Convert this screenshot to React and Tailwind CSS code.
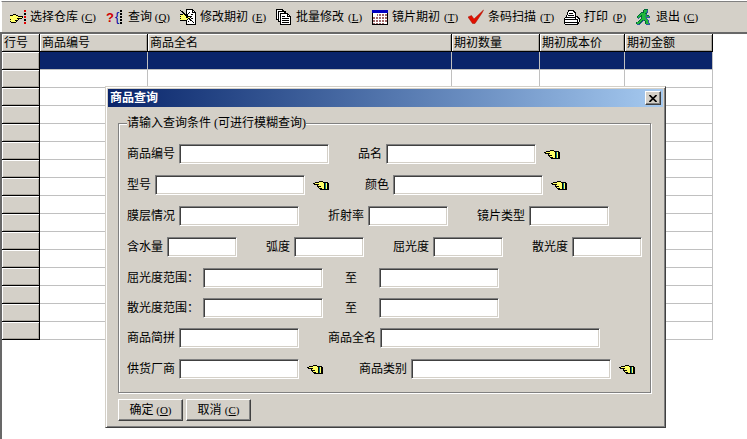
import React from 'react';

const COLORS = {
  k: '#000000',
  y: '#ffff66',
  w: '#ffffff',
  n: '#0000c0',
  r: '#e00000',
  m: '#a06868',
  g: '#22b83c',
  d: '#006838',
  b: '#3058a0',
  t: '#008080',
};

const HAND = [
  '......kkkk......',
  '..kkkkyyyykkkkk.',
  'kkyyyyyyyyyktykk',
  '.kkkkkyyyyyktykk',
  '....kyyyyyyktykk',
  '....kkkkyyyktykk',
  '.....kyyyyyktykk',
  '......kkkyyktykk',
  '.......kkkkkkkkk',
];

const PICK = [
  '..............rr',
  '..............rr',
  '................',
  '..............kk',
  '...kkk........kk',
  'kkkyyykk........',
  'yyyyyyyykkkkk.rr',
  'yyyyyyyyyyyyk.rr',
  'yyyyyyykkkkk....',
  'kyyyyyyyk.....kk',
  'yyyyykkk......kk',
  'kyyyyyk.........',
  '.kkkkk........rr',
  '..............rr',
];

const EDIT = [
  '......kkkkkkk...',
  'k.....kwwwwwkk..',
  '.kk...kwwwwwkwk.',
  '..kk..kwwkwwkkkk',
  '...kk.kwkwwwwwwk',
  'kkkykkkkwwwkkwwk',
  'yyyyykkkwwwwwwwk',
  'kyyyyykkkkkkwwwk',
  'yyyyyykkyykwwwwk',
  'kyyyyyyykkwkkwwk',
  'yyyyyyykwkkwwwwk',
  'kkkkkkkwwwkkwwwk',
  '......kwkwwwkwwk',
  '......kwwwwwwkwk',
  '......kwwwwwwwwk',
  '......kkkkkkkkkk',
];

const COPIES = [
  'kkkkkkk.........',
  'kwwwwwkk........',
  'kwkkkkkkkk......',
  'kwkwwwwwkk......',
  'kwkwkkkkkkkk....',
  'kwkwkwwwwwwkk...',
  'kwkwkwwwwwwkwk..',
  'kwkwkwkkkwwkkkk.',
  'kwkwkwwwwwwwwwk.',
  'kwkwkwkkkkkkkwk.',
  'kkkwkwwwwwwwwwk.',
  '..kwkwkkkkkkkwk.',
  '..kkkwwwwwwwwwk.',
  '....kwkkkkkkkwk.',
  '....kwwwwwwwwwk.',
  '....kkkkkkkkkkk.',
];

const CALENDAR = [
  'nnnnnnnnnnnnnnnn',
  'nnnnnnnnnnnnnnnn',
  'nnnnnnnnnnnnnnnn',
  'kwwwwwwwwwwwwwwk',
  'kwwwwmwmmwmmwmmk',
  'kwwwwmwmmwmmwmmk',
  'kwwwwwwwwwwwwwwk',
  'kmmwmmwmmwmmwmmk',
  'kmmwmmwmmwmmwmmk',
  'kwwwwwwwwwwwwwwk',
  'kmmwmmwmmwmmwmmk',
  'kmmwmmwmmwmmwmmk',
  'kwwwwwwwwwwwwwwk',
  'kmmwmmwmmwmmwwwk',
  'kkkkkkkkkkkkkkkk',
];

const PRINTER = [
  '....kkkkkk......',
  '....kwwwwkk.....',
  '...kwwwwwwkk....',
  '...kwkkkkwwk....',
  '...kwwwwwwwk....',
  '..kwkkkkkkwk....',
  '..kwwwwwwwwkkk..',
  '.kkkkkkkkkkkwkk.',
  'kwwwwwwwwwwkwwkk',
  'kkkkkkkkkkkkkkwk',
  'kwwwwwwwwwwwwkwk',
  'kwwwwwwwwwwwwkwk',
  'kkkkkkkkkkkkkkk.',
  'kwwwwwwwwwwwwkk.',
  '.kkkkkkkkkkkkk..',
];

const RUNNER = [
  '........dddd....',
  '.......dgggb....',
  '.......dgggb....',
  '.....dddggbb....',
  '....dggggdd.....',
  '...dggggggb.....',
  '..dggdggggbdd...',
  '.dggddgggbgggb..',
  '.dgb.dggggbbbb..',
  '..b..dggggb.....',
  '....dggggggb....',
  '...dggdbdgggb...',
  '..dggdb..dggb...',
  'dgggdb...dggb...',
  'dggdb....dgggb..',
  '.bbb......bbbb..',
];

const PixelIcon = ({ map }) => (
  <svg width={map[0].length} height={map.length} shapeRendering="crispEdges" aria-hidden="true" className="shrink-0">
    {map.map((line, y) =>
      line.split('').map((c, x) =>
        c === '.' ? null : <rect key={`${x}-${y}`} x={x} y={y} width="1" height="1" fill={COLORS[c]} />
      )
    )}
  </svg>
);

const QueryIcon = () => (
  <svg width="18" height="16" aria-hidden="true" className="shrink-0">
    <text x="0" y="13" fill="#d00000" fontSize="13" fontWeight="bold" fontFamily="Liberation Sans">?</text>
    <text x="9" y="12" fill="#0000a0" fontSize="13" fontFamily="Liberation Sans">{'{'}</text>
    <path d="M15 1V15" stroke="#000" strokeWidth="2" strokeDasharray="2 1" />
  </svg>
);

const CheckIcon = () => (
  <svg width="16" height="16" viewBox="0 0 16 16" aria-hidden="true" className="shrink-0">
    <path d="M0 8L3.5 6.5L6 10L15.5 1L14 4L7 14.5L4.5 14.5Z" fill="#e01000" stroke="#a01000" strokeWidth=".5" />
  </svg>
);

const toolbar = [
  { label: '选择仓库', hotkey: 'C', icon: <PixelIcon map={PICK} /> },
  { label: '查询', hotkey: 'Q', icon: <QueryIcon /> },
  { label: '修改期初', hotkey: 'E', icon: <PixelIcon map={EDIT} /> },
  { label: '批量修改', hotkey: 'L', icon: <PixelIcon map={COPIES} /> },
  { label: '镜片期初', hotkey: 'T', icon: <PixelIcon map={CALENDAR} /> },
  { label: '条码扫描', hotkey: 'T', icon: <CheckIcon /> },
  { label: '打印', hotkey: 'P', icon: <PixelIcon map={PRINTER} /> },
  { label: '退出', hotkey: 'C', icon: <PixelIcon map={RUNNER} /> },
];

const columns = [
  { title: '行号', width: 'w-[38px]' },
  { title: '商品编号', width: 'w-[108px]' },
  { title: '商品全名', width: 'w-[304px]' },
  { title: '期初数量', width: 'w-[88px]' },
  { title: '期初成本价', width: 'w-[85px]' },
  { title: '期初金额', width: 'w-[88px]' },
];

const rows = Array.from({ length: 16 }, (_, i) => i);

const Hotkey = ({ letter }) => (
  <span className="w-[18px] text-right text-[11px]">
    (<u>{letter}</u>)
  </span>
);

const Toolbar = () => (
  <div className="border-t border-l border-white bg-[#d4d0c8]">
    <div className="flex h-[31px] items-center gap-[10px] border-t border-l border-t-[#808080] border-l-white pl-2">
      {toolbar.map((item) => (
        <button key={item.label} type="button" className="flex shrink-0 items-center">
          {item.icon}
          <span className="ml-1">{item.label}</span>
          <Hotkey letter={item.hotkey} />
        </button>
      ))}
    </div>
  </div>
);

const headCell = 'h-[18px] border-r border-b border-black bg-[#d4d0c8] shadow-[inset_1px_1px_0_#fff,inset_-1px_-1px_0_#a8a49c]';

const StockTable = () => (
  <table className="w-[711px] table-fixed border-separate border-spacing-0">
    <thead>
      <tr>
        {columns.map((col) => (
          <th key={col.title} className={`${headCell} ${col.width} p-0 pl-[2px] text-left font-normal`}>{col.title}</th>
        ))}
      </tr>
    </thead>
    <tbody>
      {rows.map((row) => (
        <tr key={row} className={row === 0 ? 'bg-[#0a246a]' : 'bg-white'}>
          <td className={`${headCell} p-0`}></td>
          {columns.slice(1).map((col) => (
            <td key={col.title} className="h-[18px] border-r border-b border-[#c0c0c0] p-0"></td>
          ))}
        </tr>
      ))}
    </tbody>
  </table>
);

const Field = ({ id, label, width, lookup, gap = 'gap-1' }) => (
  <div className="flex items-center">
    <div className={`flex items-center ${gap}`}>
      <label htmlFor={id} className="whitespace-nowrap">{label}</label>
      <input
        id={id}
        type="text"
        className={`${width} h-5 border border-t-[#808080] border-r-white border-b-white border-l-[#808080] bg-white px-1 shadow-[inset_1px_1px_0_#404040,inset_-1px_-1px_0_#d4d0c8] outline-none`}
      />
    </div>
    {lookup && (
      <button type="button" aria-label={`选择${label}`} className="ml-2 w-[23px]">
        <PixelIcon map={HAND} />
      </button>
    )}
  </div>
);

const Row = ({ children }) => <div className="flex gap-[29px]">{children}</div>;

const RangeRow = ({ id, label }) => (
  <div className="flex gap-[22px]">
    <Field id={`${id}-from`} label={label} width="w-[120px]" />
    <Field id={`${id}-to`} label="至" width="w-[120px]" gap="gap-[22px]" />
  </div>
);

const DialogButton = ({ label, hotkey }) => (
  <button
    type="button"
    className="flex h-[22px] w-[65px] items-center justify-center border border-t-white border-r-[#404040] border-b-[#404040] border-l-white shadow-[inset_-1px_-1px_0_#808080]"
  >
    {label}
    <Hotkey letter={hotkey} />
  </button>
);

const QueryDialog = () => (
  <div
    role="dialog"
    aria-labelledby="dialog-title"
    className="absolute top-[86px] left-[105px] w-[561px] border border-t-[#d4d0c8] border-r-[#404040] border-b-[#404040] border-l-[#d4d0c8] bg-[#d4d0c8] p-[2px] shadow-[inset_1px_1px_0_#fff,inset_-1px_-1px_0_#808080]"
  >
    <div className="flex h-[18px] items-center justify-between bg-linear-to-r from-[#0a246a] to-[#a6caf0] px-[2px]">
      <h2 id="dialog-title" className="font-bold text-white">商品查询</h2>
      <button
        type="button"
        aria-label="关闭"
        className="flex h-[14px] w-4 items-center justify-center border border-t-white border-r-[#404040] border-b-[#404040] border-l-white bg-[#d4d0c8] shadow-[inset_-1px_-1px_0_#808080]"
      >
        <svg width="8" height="7" viewBox="0 0 8 7" aria-hidden="true">
          <path d="M.5 0L7.5 7M7.5 0L.5 7" stroke="#000" strokeWidth="1.6" />
        </svg>
      </button>
    </div>

    <div className="pt-[9px] pr-3 pb-1 pl-[10px]">
      <fieldset className="border border-[#808080] pt-[14px] pb-[13px] pl-[8px] shadow-[inset_1px_1px_0_#fff,1px_1px_0_#fff]">
        <legend className="bg-[#d4d0c8] leading-[14px]">请输入查询条件 (可进行模糊查询)</legend>
        <div className="flex flex-col gap-[11px]">
          <Row>
            <Field id="code" label="商品编号" width="w-[150px]" />
            <Field id="name" label="品名" width="w-[150px]" lookup />
          </Row>
          <Row>
            <Field id="model" label="型号" width="w-[150px]" lookup />
            <Field id="color" label="颜色" width="w-[150px]" lookup />
          </Row>
          <Row>
            <Field id="coating" label="膜层情况" width="w-[120px]" />
            <Field id="refraction" label="折射率" width="w-[80px]" />
            <Field id="lens" label="镜片类型" width="w-[80px]" />
          </Row>
          <Row>
            <Field id="water" label="含水量" width="w-[70px]" />
            <Field id="curve" label="弧度" width="w-[70px]" />
            <Field id="diopter" label="屈光度" width="w-[70px]" />
            <Field id="astigmatism" label="散光度" width="w-[70px]" />
          </Row>
          <div className="flex flex-col gap-[10px]">
            <RangeRow id="diopter-range" label="屈光度范围：" />
            <RangeRow id="astigmatism-range" label="散光度范围：" />
            <Row>
              <Field id="pinyin" label="商品简拼" width="w-[120px]" />
              <Field id="full-name" label="商品全名" width="w-[220px]" />
            </Row>
          </div>
          <Row>
            <Field id="supplier" label="供货厂商" width="w-[120px]" lookup />
            <Field id="category" label="商品类别" width="w-[200px]" lookup />
          </Row>
        </div>
      </fieldset>
      <div className="mt-[6px] flex gap-[3px]">
        <DialogButton label="确定" hotkey="O" />
        <DialogButton label="取消" hotkey="C" />
      </div>
    </div>
  </div>
);

const App = () => (
  <div className="relative flex min-h-screen flex-col overflow-hidden bg-white font-['Liberation_Serif','Noto_Sans_CJK_SC',sans-serif] text-[12px] leading-[16px] text-black">
    <Toolbar />
    <main className="flex-1 border-t-2 border-l-2 border-[#686868]">
      <StockTable />
    </main>
    <QueryDialog />
  </div>
);

export default App;
